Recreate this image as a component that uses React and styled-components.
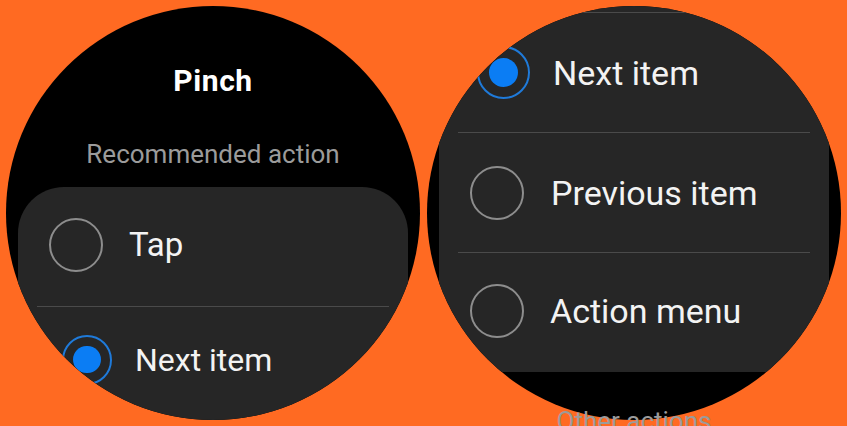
import React from 'react';
import styled, { createGlobalStyle } from 'styled-components';

const GlobalStyle = createGlobalStyle`
  html, body {
    margin: 0;
    padding: 0;
    background: #ff6a22;
  }
  body {
    font-family: Roboto, "Liberation Sans", sans-serif;
  }
`;

const Stage = styled.div`
  display: flex;
  gap: 7px;
  padding: 6px;
  height: 414px;
`;

const Watch = styled.div`
  position: relative;
  flex: none;
  width: 414px;
  height: 414px;
`;

const Screen = styled.div`
  width: 100%;
  height: 100%;
  border-radius: 50%;
  background: #000;
  overflow: hidden;
  display: flex;
  flex-direction: column;
  align-items: center;
`;

const Title = styled.h1`
  margin: 60px 0 0;
  font-size: 30px;
  line-height: 30px;
  font-weight: 700;
  letter-spacing: 0.6px;
  color: #fff;
`;

const Subtitle = styled.div`
  margin-top: 45px;
  font-size: 26px;
  line-height: 26px;
  color: #9b9b9b;
`;

const Card = styled.div`
  flex: none;
  width: 390px;
  margin-top: ${(p) => p.$top}px;
  padding-top: ${(p) => p.$pad || 0}px;
  background: #262626;
  border-radius: 46px 46px 0 0;
  display: flex;
  flex-direction: column;
`;

const Row = styled.div`
  height: 119px;
  box-sizing: border-box;
  display: flex;
  align-items: center;
  gap: ${(p) => p.$gap}px;
  padding-left: ${(p) => p.$indent}px;
  padding-bottom: ${(p) => p.$lift}px;
`;

const Label = styled.span`
  font-size: ${(p) => p.$size}px;
  color: #f3f3f3;
  white-space: nowrap;
`;

const Radio = styled.span`
  flex: none;
  box-sizing: border-box;
  width: ${(p) => p.$size}px;
  height: ${(p) => p.$size}px;
  border-radius: 50%;
  border: ${(p) => (p.$on ? '2px solid #1f7ad9' : '2.5px solid #8d8d8d')};
  display: flex;
  align-items: center;
  justify-content: center;

  &::after {
    content: '';
    display: ${(p) => (p.$on ? 'block' : 'none')};
    width: 60%;
    height: 60%;
    border-radius: 50%;
    background: #0b7df4;
  }
`;

const Divider = styled.div`
  height: 1px;
  margin: 0 19px;
  background: #4a4a4a;
`;

const Spill = styled.div`
  position: absolute;
  left: 0;
  right: 0;
  top: 402px;
  text-align: center;
  font-size: 26px;
  line-height: 26px;
  color: #9b9b9b;
`;

function Option({ label, on, size = 34, radio = 54, indent = 31, gap = 26, lift = 0 }) {
  return (
    <Row $indent={indent} $gap={gap} $lift={lift}>
      <Radio $on={on} $size={radio} />
      <Label $size={size}>{label}</Label>
    </Row>
  );
}

export default function App() {
  return (
    <>
      <GlobalStyle />
      <Stage>
        <Watch>
          <Screen>
            <Title>Pinch</Title>
            <Subtitle>Recommended action</Subtitle>
            <Card $top={20}>
              <Option label="Tap" size={33} lift={4} />
              <Divider />
              <Option label="Next item" on size={32} radio={50} indent={44} gap={23} lift={14} />
            </Card>
          </Screen>
        </Watch>

        <Watch>
          <Screen>
            {/* list scrolled: the Tap row sits above the top edge */}
            <Card $top={0} $pad={6}>
              <Divider />
              <Option label="Next item" on radio={53} indent={38} gap={23} lift={-4} />
              <Divider />
              <Option label="Previous item" gap={27} />
              <Divider />
              <Option label="Action menu" gap={26} lift={4} />
            </Card>
          </Screen>
          <Spill>Other actions</Spill>
        </Watch>
      </Stage>
    </>
  );
}
